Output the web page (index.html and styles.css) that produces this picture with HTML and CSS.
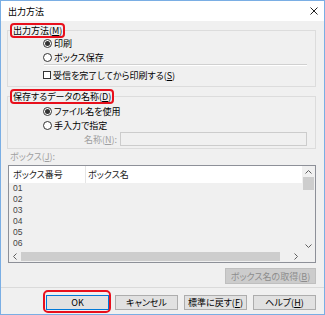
FILE: index.html
```html
<!DOCTYPE html>
<html lang="ja">
<head>
    <meta charset="UTF-8">
    <meta name="viewport" content="width=device-width, initial-scale=1.0">
    <title>出力方法</title>
    <link rel="stylesheet" href="styles.css">
</head>
<body>
    <div class="window">
        <div class="titlebar">
            <span class="title">出力方法</span>
            <svg class="close" width="8" height="8" viewBox="0 0 8 8">
                <path d="M0.5 0.5 L7.5 7.5 M7.5 0.5 L0.5 7.5" stroke="#222" stroke-width="1" fill="none"/>
            </svg>
        </div>

        <div class="content">
            <fieldset class="group group-output">
                <legend class="mark">出力方法(<u>M</u>)</legend>
                <div class="group-body">
                    <div class="opt"><span class="radio on"></span>印刷</div>
                    <div class="opt"><span class="radio"></span>ボックス保存</div>
                    <div class="sep"></div>
                    <div class="opt check-row"><span class="check"></span>受信を完了してから印刷する(<u>S</u>)</div>
                </div>
            </fieldset>

            <fieldset class="group group-name">
                <legend class="mark">保存するデータの名称(<u>D</u>)</legend>
                <div class="group-body">
                    <div class="opt"><span class="radio on"></span>ファイル名を使用</div>
                    <div class="opt"><span class="radio"></span>手入力で指定</div>
                    <div class="name-row">
                        <label class="name-label disabled">名称(<u>N</u>):</label>
                        <div class="text-input"></div>
                    </div>
                </div>
            </fieldset>

            <div class="list-label disabled">ボックス(<u>J</u>):</div>
            <div class="listview">
                <div class="lv-main">
                    <div class="lv-cols">
                        <div class="lv-header">
                            <div class="col col-no">ボックス番号</div>
                            <div class="col col-name">ボックス名</div>
                        </div>
                        <div class="lv-rows">
                            <div class="lv-row">01</div>
                            <div class="lv-row">02</div>
                            <div class="lv-row">03</div>
                            <div class="lv-row">04</div>
                            <div class="lv-row">05</div>
                            <div class="lv-row">06</div>
                        </div>
                    </div>
                    <div class="vscroll">
                        <div class="sb-arrow">
                            <svg width="7" height="4" viewBox="0 0 7 4"><path d="M0.5 3.5 L3.5 0.5 L6.5 3.5" stroke="#606060" fill="none"/></svg>
                        </div>
                        <div class="vthumb"></div>
                        <div class="sb-fill"></div>
                        <div class="sb-arrow">
                            <svg width="7" height="4" viewBox="0 0 7 4"><path d="M0.5 0.5 L3.5 3.5 L6.5 0.5" stroke="#606060" fill="none"/></svg>
                        </div>
                    </div>
                </div>
                <div class="hscroll-row">
                    <div class="hscroll">
                        <div class="sb-arrow h">
                            <svg width="4" height="7" viewBox="0 0 4 7"><path d="M3.5 0.5 L0.5 3.5 L3.5 6.5" stroke="#606060" fill="none"/></svg>
                        </div>
                        <div class="hthumb"></div>
                        <div class="sb-fill"></div>
                        <div class="sb-arrow h">
                            <svg width="4" height="7" viewBox="0 0 4 7"><path d="M0.5 0.5 L3.5 3.5 L0.5 6.5" stroke="#606060" fill="none"/></svg>
                        </div>
                    </div>
                    <div class="corner"></div>
                </div>
            </div>

            <div class="fetch-row">
                <button class="btn btn-fetch" disabled>ボックス名の取得(<u>B</u>)</button>
            </div>
        </div>

        <div class="footer">
            <button class="btn btn-default">OK</button>
            <button class="btn">キャンセル</button>
            <button class="btn">標準に戻す(<u>F</u>)</button>
            <button class="btn">ヘルプ(<u>H</u>)</button>
        </div>
    </div>
</body>
</html>
```

FILE: styles.css
```css
* {
    margin: 0;
    padding: 0;
    box-sizing: border-box;
}

body {
    font-family: "Noto Sans CJK JP", "Noto Sans", sans-serif;
    font-size: 9px;
    font-feature-settings: "palt";
    color: #000;
    background: #fff;
}

u {
    text-decoration: underline;
    text-underline-offset: 1px;
}

.window {
    width: 325px;
    height: 315px;
    border: 1px solid #7aaee4;
    background: #f0f0f0;
    display: flex;
    flex-direction: column;
}

.titlebar {
    height: 20px;
    background: #fff;
    display: flex;
    align-items: center;
    justify-content: space-between;
    padding: 0 6px 0 7px;
    line-height: 11px;
}

.close {
    display: block;
}

.content {
    padding-top: 2px;
}

/* group boxes */
.group {
    margin: 0 8px 0 6px;
    border: 1px solid #dcdcdc;
    padding: 0;
    min-width: 0;
}

.group-name {
    margin-top: 2px;
}

.mark {
    margin-left: 2px;
    padding: 0 1px;
    border: 2px solid #e8101c;
    border-radius: 4px;
    line-height: 11px;
}

.group-body {
    padding-left: 35px;
    margin-top: -2px;
}

.group-output .group-body {
    padding-bottom: 5px;
}

.group-name .group-body {
    margin-top: 0;
    padding-bottom: 2px;
}

.opt {
    height: 14px;
    display: flex;
    align-items: center;
    white-space: nowrap;
}

.radio {
    width: 9px;
    height: 9px;
    border: 1px solid #333;
    border-radius: 50%;
    margin-right: 2px;
    display: flex;
    align-items: center;
    justify-content: center;
    background: #fff;
}

.radio.on::after {
    content: "";
    width: 5px;
    height: 5px;
    border-radius: 50%;
    background: #333;
}

.check {
    width: 8px;
    height: 8px;
    border: 1px solid #333;
    background: #fff;
    margin-right: 2px;
}

.sep {
    margin: 0 8px 0 1px;
    border-top: 1px solid #d0d0d0;
    border-bottom: 1px solid #fff;
}

.check-row {
    height: 12px;
    margin-top: 3px;
}

.disabled {
    color: #a0a0a0;
}

.name-row {
    display: flex;
    align-items: center;
    height: 14px;
}

.name-label {
    width: 74px;
    text-align: right;
    margin-right: 3px;
}

.text-input {
    flex: 1;
    height: 14px;
    margin-right: 8px;
    border: 1px solid #cccccc;
    background: #f0f0f0;
}

/* list */
.list-label {
    margin: 2px 0 0 9px;
    line-height: 11px;
}

.listview {
    margin: 3px 8px 0 7px;
    height: 98px;
    border: 1px solid #8d9098;
    display: flex;
    flex-direction: column;
}

.lv-main {
    flex: 1;
    display: flex;
}

.lv-cols {
    flex: 1;
    display: flex;
    flex-direction: column;
}

.lv-header {
    height: 17px;
    background: #fff;
    display: flex;
    color: #222;
}

.col {
    line-height: 17px;
    padding-left: 4px;
}

.col-no {
    width: 77px;
    border-right: 1px solid #e5e5e5;
}

.col-name {
    flex: 1;
    padding-left: 2px;
}

.lv-rows {
    flex: 1;
    background: #f0f0f0;
}

.lv-row {
    height: 11px;
    line-height: 11px;
    padding-left: 4px;
    font-family: "Liberation Sans", sans-serif;
    font-size: 8.5px;
    color: #444;
}

.vscroll {
    width: 13px;
    display: flex;
    flex-direction: column;
    background: #f0f0f0;
}

.sb-arrow {
    height: 11px;
    display: flex;
    align-items: center;
    justify-content: center;
}

.sb-arrow svg {
    display: block;
}

.vthumb {
    height: 13px;
    margin: 0 1px;
    background: #cdcdcd;
}

.sb-fill {
    flex: 1;
}

.hscroll-row {
    height: 11px;
    display: flex;
}

.hscroll {
    flex: 1;
    display: flex;
    background: #f0f0f0;
}

.sb-arrow.h {
    width: 12px;
    height: 11px;
}

.hthumb {
    width: 259px;
    margin: 1px 0;
    background: #cdcdcd;
}

.corner {
    width: 13px;
    background: #f0f0f0;
}

/* buttons */
.btn {
    font-family: inherit;
    font-size: 9px;
    font-feature-settings: "palt";
    height: 15px;
    line-height: 13px;
    background: #e1e1e1;
    border: 1px solid #adadad;
    color: #000;
}

.fetch-row {
    display: flex;
    justify-content: flex-end;
    margin: 5px 8px 0 0;
}

.btn-fetch {
    width: 91px;
    height: 16px;
    background: #cccccc;
    border-color: #bfbfbf;
    color: #8d8d8d;
}

.footer {
    margin-top: 3px;
    border-top: 1px solid #dadada;
    padding: 7px 8px 0 45px;
    display: flex;
    gap: 6px;
}

.footer .btn {
    flex: 1;
}

.btn-default {
    position: relative;
    border-color: #0078d7;
}

/* red highlight round the default button */
.btn-default::after {
    content: "";
    position: absolute;
    top: -6px;
    bottom: -4px;
    left: -4px;
    right: -3px;
    border: 2px solid #e8101c;
    border-radius: 5px;
}
```
